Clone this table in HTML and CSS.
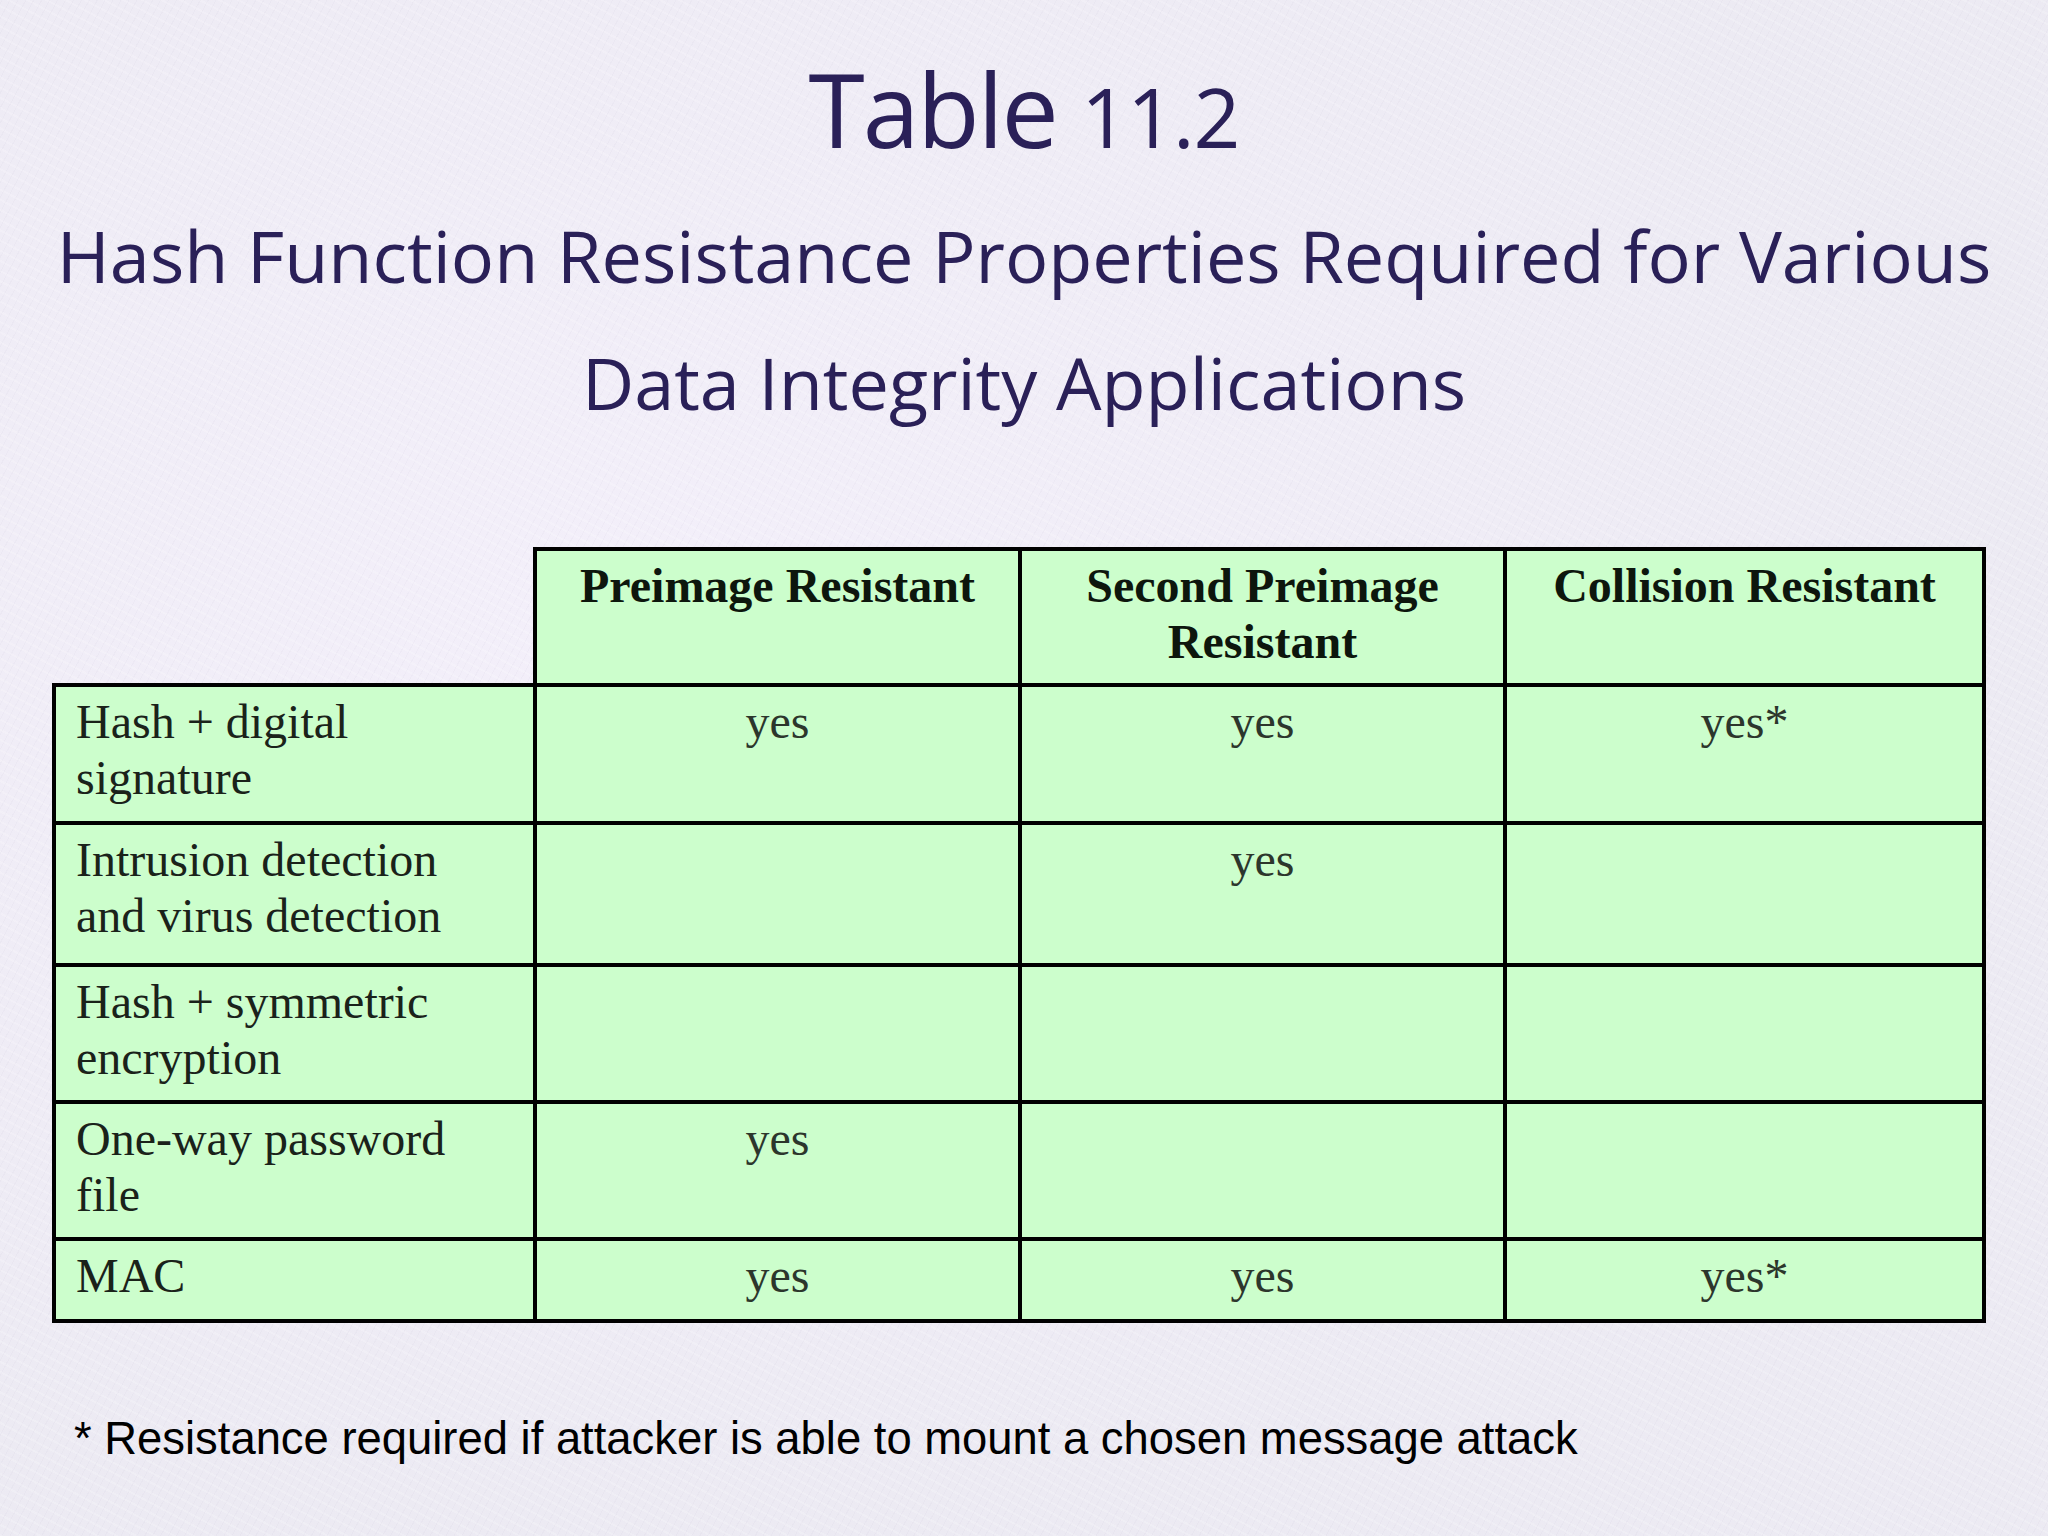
FILE: index.html
```html
<!DOCTYPE html>
<html lang="en">
<head>
<meta charset="utf-8">
<title>Table 11.2</title>
<link rel="stylesheet" href="styles.css">
</head>
<body>
<div class="slide">
  <h1 class="title">Table <span class="num">11.2</span></h1>
  <h2 class="subtitle">Hash Function Resistance Properties Required for Various<br>Data Integrity Applications</h2>
  <table class="props">
    <colgroup>
      <col class="c1"><col class="c2"><col class="c3"><col class="c4">
    </colgroup>
    <thead>
      <tr class="r-head">
        <th class="corner"></th>
        <th>Preimage Resistant</th>
        <th>Second Preimage<br>Resistant</th>
        <th>Collision Resistant</th>
      </tr>
    </thead>
    <tbody>
      <tr class="r1">
        <td class="app">Hash + digital<br>signature</td>
        <td>yes</td>
        <td>yes</td>
        <td>yes*</td>
      </tr>
      <tr class="r2">
        <td class="app">Intrusion detection<br>and virus detection</td>
        <td></td>
        <td>yes</td>
        <td></td>
      </tr>
      <tr class="r3">
        <td class="app">Hash + symmetric<br>encryption</td>
        <td></td>
        <td></td>
        <td></td>
      </tr>
      <tr class="r4">
        <td class="app">One-way password<br>file</td>
        <td>yes</td>
        <td></td>
        <td></td>
      </tr>
      <tr class="r5">
        <td class="app">MAC</td>
        <td>yes</td>
        <td>yes</td>
        <td>yes*</td>
      </tr>
    </tbody>
  </table>
  <p class="note">* Resistance required if attacker is able to mount a chosen message attack</p>
</div>
</body>
</html>
```
FILE: styles.css
```css
html, body {
  margin: 0;
  padding: 0;
}

body {
  width: 2048px;
  height: 1536px;
  overflow: hidden;
  background-color: #efedf5;
  background-image:
    repeating-linear-gradient(28deg, rgba(255,255,255,0.18) 0 2px, rgba(0,0,0,0) 2px 9px),
    repeating-linear-gradient(-62deg, rgba(120,110,150,0.035) 0 1px, rgba(0,0,0,0) 1px 7px),
    radial-gradient(ellipse at 30% 40%, rgba(245,240,252,0.7), rgba(230,228,238,0.3) 70%);
}

.slide {
  width: 2048px;
  height: 1536px;
  padding-top: 49px;
  box-sizing: border-box;
}

.title {
  margin: 0;
  text-align: center;
  font-family: "Open Sans", "Noto Sans", sans-serif;
  font-weight: 400;
  font-size: 102px;
  line-height: 120px;
  color: #2a2058;
  letter-spacing: -2px;
}

.title .num {
  font-size: 82px;
  letter-spacing: -1px;
}

.subtitle {
  margin: 16px 0 0 0;
  text-align: center;
  font-family: "Open Sans", "Noto Sans", sans-serif;
  font-weight: 400;
  font-size: 72px;
  line-height: 127px;
  color: #2a2058;
  letter-spacing: 0;
}

.props {
  margin: 101px 0 0 52px;
  border-collapse: collapse;
  table-layout: fixed;
  font-family: "Liberation Serif", "Times New Roman", serif;
  font-size: 48px;
  line-height: 56px;
  color: #1f2a1f;
}

.props col.c1 { width: 481px; }
.props col.c2 { width: 485px; }
.props col.c3 { width: 485px; }
.props col.c4 { width: 479px; }

.props th,
.props td {
  border: 4px solid #000;
  background: #ccfecc;
  vertical-align: top;
  text-align: center;
  padding: 7px 10px 0 10px;
  box-sizing: border-box;
}

.props th {
  font-weight: 700;
  color: #0d160d;
}

.props th.corner {
  border: none;
  background: transparent;
}

.props td.app {
  text-align: left;
  padding-left: 20px;
  color: #1a221a;
}

.props td {
  color: #2c362c;
}

.r-head { height: 136px; }
.r1 { height: 138px; }
.r2 { height: 142px; }
.r3 { height: 137px; }
.r4 { height: 137px; }
.r5 { height: 82px; }

.note {
  margin: 90px 0 0 74px;
  font-family: "Liberation Sans", Arial, sans-serif;
  font-size: 45.4px;
  line-height: 52px;
  color: #000;
  letter-spacing: 0;
}
```
